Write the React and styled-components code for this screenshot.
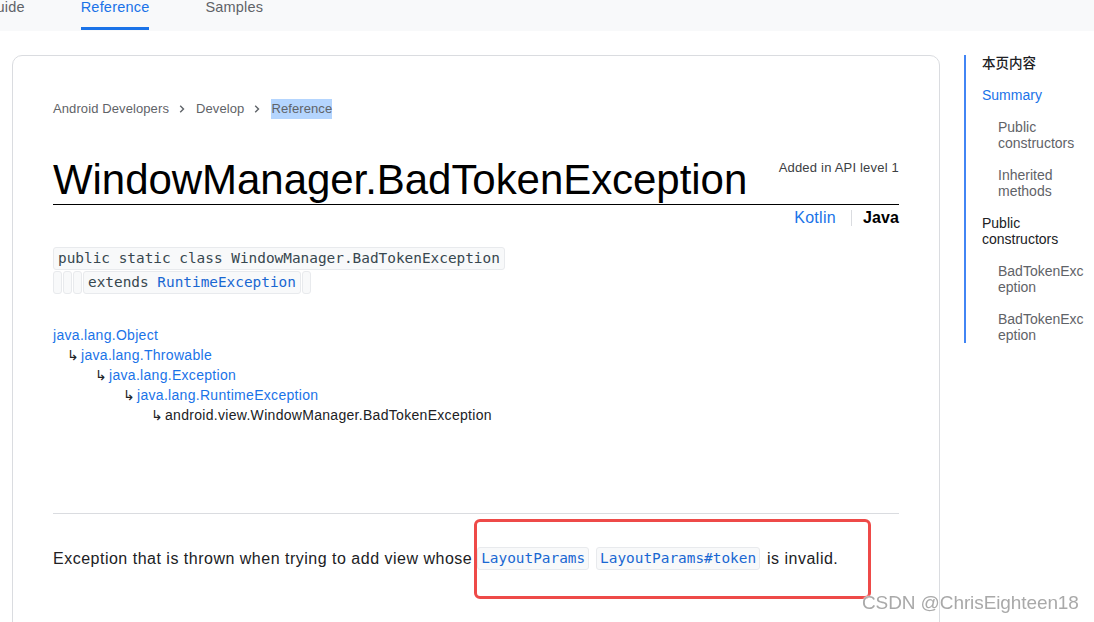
import React from "react";
import styled, { createGlobalStyle } from "styled-components";

const GlobalStyle = createGlobalStyle`
  html, body { margin: 0; padding: 0; background: #fff; }
  body {
    font-family: "Liberation Sans", Arial, "Noto Sans CJK SC", sans-serif;
    color: #202124;
    overflow: hidden;
    width: 1094px;
    height: 622px;
  }
  * { box-sizing: border-box; }
`;

const MONO = `"DejaVu Sans Mono", "Liberation Mono", monospace`;

const TopBar = styled.div`
  height: 31px;
  background: #f8f9fa;
  display: flex;
  align-items: stretch;
  gap: 56px;
  margin-left: -15px;
  overflow: hidden;
`;

const Tab = styled.div`
  font-size: 14.5px;
  line-height: 14px;
  letter-spacing: 0.2px;
  color: ${(p) => (p.$active ? "#1a73e8" : "#5f6368")};
  border-bottom: 3px solid ${(p) => (p.$active ? "#1a73e8" : "transparent")};
  height: 30px;
`;

const Main = styled.div`
  display: flex;
  align-items: flex-start;
  padding: 24px 0 0 12px;
  gap: 24px;
`;

const Card = styled.div`
  width: 928px;
  min-height: 620px;
  border: 1px solid #dadce0;
  border-radius: 10px;
  padding: 43px 40px 0 40px;
`;

const Breadcrumbs = styled.div`
  display: flex;
  align-items: center;
  font-size: 13px;
  line-height: 18px;
  letter-spacing: 0.1px;
  color: #5f6368;
`;

const Crumb = styled.span`
  background: ${(p) => (p.$selected ? "#b4d5fe" : "transparent")};
  padding: ${(p) => (p.$selected ? "1px 0" : "0")};
`;

const Chevron = styled.svg`
  width: 8px;
  height: 10px;
  margin: 0 10px 0 9px;
`;

const Header = styled.div`
  margin-top: 37px;
  display: flex;
  justify-content: space-between;
  align-items: flex-start;
  border-bottom: 1px solid #000;
`;

const Title = styled.h1`
  margin: 0;
  font-size: 42px;
  line-height: 48px;
  font-weight: 400;
  color: #000;
  letter-spacing: -0.05px;
`;

const ApiLevel = styled.div`
  font-size: 13px;
  line-height: 18px;
  padding-top: 3px;
  letter-spacing: 0.2px;
  color: #3c4043;
`;

const LangSwitch = styled.div`
  display: flex;
  justify-content: flex-end;
  align-items: center;
  margin-top: 3px;
  font-size: 16px;
  line-height: 20px;
`;

const Lang = styled.span`
  color: ${(p) => (p.$active ? "#000" : "#1a73e8")};
  font-weight: ${(p) => (p.$active ? 700 : 400)};
  letter-spacing: ${(p) => (p.$active ? "0.1px" : "0.3px")};
`;

const LangSep = styled.span`
  width: 1px;
  height: 16px;
  background: #dadce0;
  margin: 0 11px 0 15px;
`;

const CodeBlock = styled.div`
  margin-top: 19px;
  display: flex;
  flex-direction: column;
  gap: 1px;
`;

const CodeRow = styled.div`
  display: flex;
  gap: 1px;
`;

const CodeBox = styled.span`
  display: inline-block;
  height: 23px;
  min-width: 9px;
  padding: 0 ${(p) => (p.$empty ? "0" : "4px")};
  background: #f8f9fa;
  border: 1px solid #e8eaed;
  border-radius: 3px;
  font-family: ${MONO};
  font-size: 14.4px;
  line-height: 21px;
  color: #37474f;
  white-space: pre;
`;

const CodeLink = styled.span`
  color: #1967d2;
`;

const Hierarchy = styled.div`
  margin-top: 31px;
  font-size: 14px;
  line-height: 20px;
  letter-spacing: 0.3px;
`;

const HLine = styled.div`
  padding-left: ${(p) => (p.$level === 0 ? 0 : 14 + (p.$level - 1) * 28)}px;
  color: ${(p) => (p.$link ? "#1a73e8" : "#202124")};
  display: flex;
`;

const HArrow = styled.span`
  width: 14px;
  color: #202124;
  font-family: "DejaVu Sans", sans-serif;
  font-size: 14px;
  letter-spacing: 0;
`;

const Divider = styled.div`
  margin-top: 88px;
  height: 1px;
  background: #dadce0;
`;

const Description = styled.p`
  margin: 33px 0 0;
  font-size: 16px;
  line-height: 24px;
  letter-spacing: 0.5px;
  color: #202124;
`;

const Annotated = styled.span`
  position: relative;
`;

const RedBox = styled.span`
  position: absolute;
  left: -3px;
  right: -33px;
  top: -31px;
  bottom: -32px;
  border: 3px solid #ee4a48;
  border-radius: 6px;
  pointer-events: none;
`;

const Chip = styled.code`
  display: inline-block;
  font-family: ${MONO};
  font-size: 14.4px;
  line-height: 21px;
  letter-spacing: 0;
  padding: 0 3px;
  margin-right: 2px;
  background: #f8f9fa;
  border: 1px solid #e8eaed;
  border-radius: 3px;
  color: #1967d2;
  font-weight: 500;
  vertical-align: 1px;
`;

const Sidebar = styled.nav`
  border-left: 2px solid #4285f4;
  padding-left: 16px;
  width: 130px;
  display: flex;
  flex-direction: column;
  gap: 16px;
  font-size: 14px;
  line-height: 16px;
`;

const TocTitle = styled.div`
  color: #202124;
  font-weight: 500;
  font-family: "Noto Sans CJK SC", sans-serif;
  font-size: 13.5px;
  margin-top: -1px;
  margin-bottom: 1px;
`;

const TocItem = styled.div`
  padding-left: ${(p) => (p.$sub ? 16 : 0)}px;
  width: ${(p) => (p.$sub ? 112 : 100)}px;
  color: ${(p) => (p.$active ? "#1a73e8" : p.$sub ? "#5f6368" : "#202124")};
`;

const Watermark = styled.div`
  position: fixed;
  left: 862px;
  top: 591px;
  font-size: 19px;
  line-height: 24px;
  color: #a9a9a9;
  letter-spacing: -0.1px;
  text-shadow: 0 0 2px #fff, 0 0 1px #fff;
`;

const hierarchy = [
  { text: "java.lang.Object", level: 0, link: true },
  { text: "java.lang.Throwable", level: 1, link: true },
  { text: "java.lang.Exception", level: 2, link: true },
  { text: "java.lang.RuntimeException", level: 3, link: true },
  { text: "android.view.WindowManager.BadTokenException", level: 4, link: false },
];

function ChevronIcon() {
  return (
    <Chevron viewBox="0 0 8 10">
      <path d="M2.2 1.8 L5.5 5 L2.2 8.2" fill="none" stroke="#5f6368" strokeWidth="1.4" />
    </Chevron>
  );
}

export default function App() {
  return (
    <>
      <GlobalStyle />
      <TopBar>
        <Tab>Guide</Tab>
        <Tab $active>Reference</Tab>
        <Tab>Samples</Tab>
      </TopBar>
      <Main>
        <Card>
          <Breadcrumbs>
            <Crumb>Android Developers</Crumb>
            <ChevronIcon />
            <Crumb>Develop</Crumb>
            <ChevronIcon />
            <Crumb $selected>Reference</Crumb>
          </Breadcrumbs>
          <Header>
            <Title>WindowManager.BadTokenException</Title>
            <ApiLevel>Added in API level 1</ApiLevel>
          </Header>
          <LangSwitch>
            <Lang>Kotlin</Lang>
            <LangSep />
            <Lang $active>Java</Lang>
          </LangSwitch>
          <CodeBlock>
            <CodeRow>
              <CodeBox>public static class WindowManager.BadTokenException</CodeBox>
            </CodeRow>
            <CodeRow>
              <CodeBox $empty />
              <CodeBox $empty />
              <CodeBox $empty />
              <CodeBox>
                extends <CodeLink>RuntimeException</CodeLink>
              </CodeBox>
              <CodeBox $empty />
            </CodeRow>
          </CodeBlock>
          <Hierarchy>
            {hierarchy.map((h) => (
              <HLine key={h.text} $level={h.level} $link={h.link}>
                {h.level > 0 && <HArrow>↳</HArrow>}
                <span>{h.text}</span>
              </HLine>
            ))}
          </Hierarchy>
          <Divider />
          <Description>
            Exception that is thrown when trying to add view whose{" "}
            <Annotated>
              <RedBox />
              <Chip>LayoutParams</Chip> <Chip>LayoutParams#token</Chip> is invalid.
            </Annotated>
          </Description>
        </Card>
        <Sidebar>
          <TocTitle>本页内容</TocTitle>
          <TocItem $active>Summary</TocItem>
          <TocItem $sub>Public constructors</TocItem>
          <TocItem $sub>Inherited methods</TocItem>
          <TocItem>Public constructors</TocItem>
          <TocItem $sub>
            BadTokenExc
            <br />
            eption
          </TocItem>
          <TocItem $sub>
            BadTokenExc
            <br />
            eption
          </TocItem>
        </Sidebar>
      </Main>
      <Watermark>CSDN @ChrisEighteen18</Watermark>
    </>
  );
}
